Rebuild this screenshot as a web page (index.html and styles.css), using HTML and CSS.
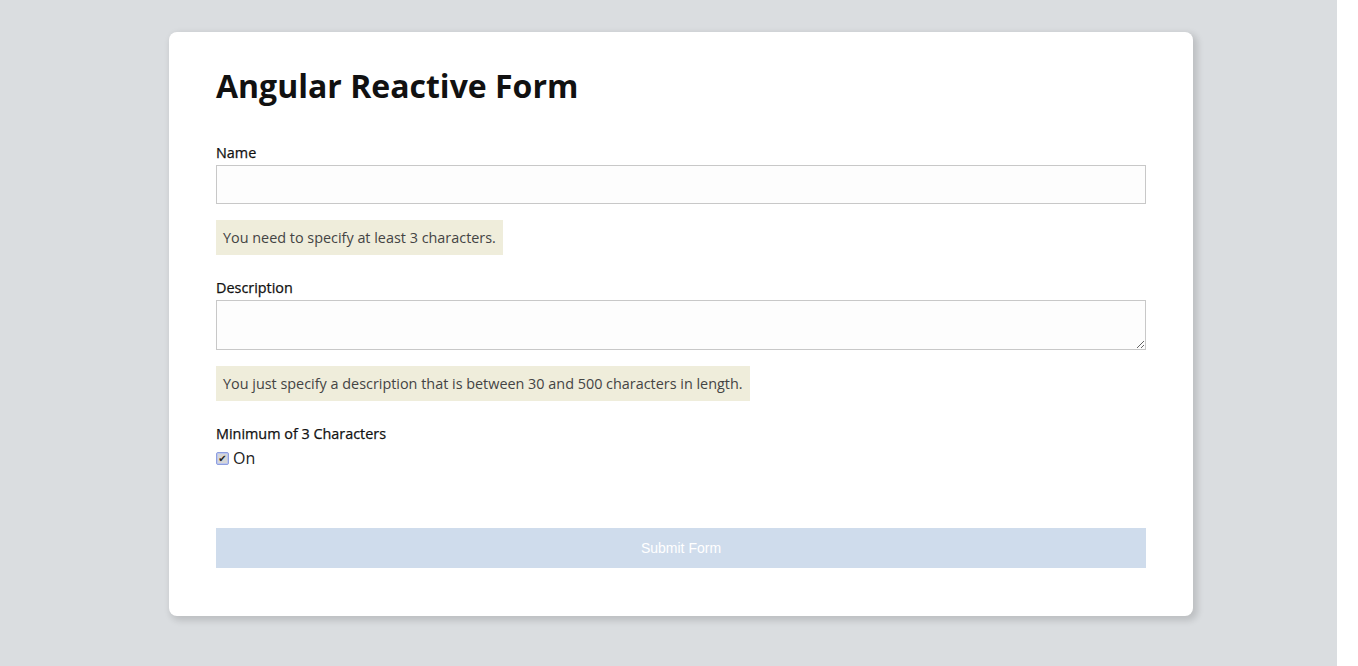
FILE: index.html
```html
<!DOCTYPE html>
<html>
<head>
<meta charset="utf-8">
<link rel="stylesheet" href="styles.css">
</head>
<body>
<div class="page">
  <div class="card">
    <h1 class="title">Angular Reactive Form</h1>
    <div class="field">
      <label class="label">Name</label>
      <input class="input" type="text">
      <div class="error">You need to specify at least 3 characters.</div>
    </div>
    <div class="field">
      <label class="label">Description</label>
      <textarea class="textarea"></textarea>
      <div class="error">You just specify a description that is between 30 and 500 characters in length.</div>
    </div>
    <div class="field check-field">
      <label class="label">Minimum of 3 Characters</label>
      <label class="check-row"><span class="checkbox">&#10004;</span><span class="check-text">On</span></label>
    </div>
    <button class="submit" disabled>Submit Form</button>
  </div>
</div>
</body>
</html>
```
FILE: styles.css
```css
html, body {
  margin: 0;
  padding: 0;
  background: #ffffff;
}
.page {
  width: 1337px;
  min-height: 666px;
  background: #dadde0;
  padding-top: 32px;
  box-sizing: border-box;
  font-family: "Open Sans", "Liberation Sans", sans-serif;
}
.card {
  margin-left: 169px;
  width: 1024px;
  height: 584px;
  box-sizing: border-box;
  background: #ffffff;
  border-radius: 8px;
  box-shadow: 3px 3px 6px 2px rgba(0, 0, 0, 0.13);
  padding: 34px 47px 48px;
  display: flex;
  flex-direction: column;
}
.title {
  margin: 0 0 37px;
  font-size: 32px;
  font-weight: 700;
  line-height: 40px;
  color: #111111;
}
.field {
  display: flex;
  flex-direction: column;
  align-items: flex-start;
}
.label {
  font-size: 14.4px;
  font-weight: 400;
  -webkit-text-stroke: 0.25px #111111;
  color: #111111;
  line-height: 20px;
  margin-bottom: 2px;
}
.input, .textarea {
  width: 930px;
  box-sizing: border-box;
  border: 1px solid #c8c8c8;
  background: #fdfdfd;
  margin: 0;
  padding: 6px;
  font-family: inherit;
}
.input { height: 39px; }
.textarea { height: 50px; resize: vertical; display: block; }
.error {
  margin-top: 16px;
  margin-bottom: 23px;
  background: #efeddb;
  color: #444444;
  font-size: 14.4px;
  line-height: 35px;
  padding: 0 7px;
}
.check-row {
  display: flex;
  align-items: center;
  gap: 4px;
  margin-top: 2px;
}
.checkbox {
  width: 11px;
  height: 11px;
  border: 1px solid #8e9fe0;
  box-shadow: inset 0 0 0 1px #bcc6ee;
  background: #d6d6d6;
  border-radius: 2px;
  font-size: 10px;
  line-height: 11px;
  text-align: center;
  color: #222;
  font-family: "DejaVu Sans", sans-serif;
}
.check-text {
  font-size: 16px;
  color: #222;
  line-height: 20px;
}
.submit {
  margin-top: auto;
  width: 930px;
  height: 40px;
  border: none;
  background: #cfdcec;
  color: #ffffff;
  font-family: "Liberation Sans", Arial, sans-serif;
  font-size: 14px;
}
```
